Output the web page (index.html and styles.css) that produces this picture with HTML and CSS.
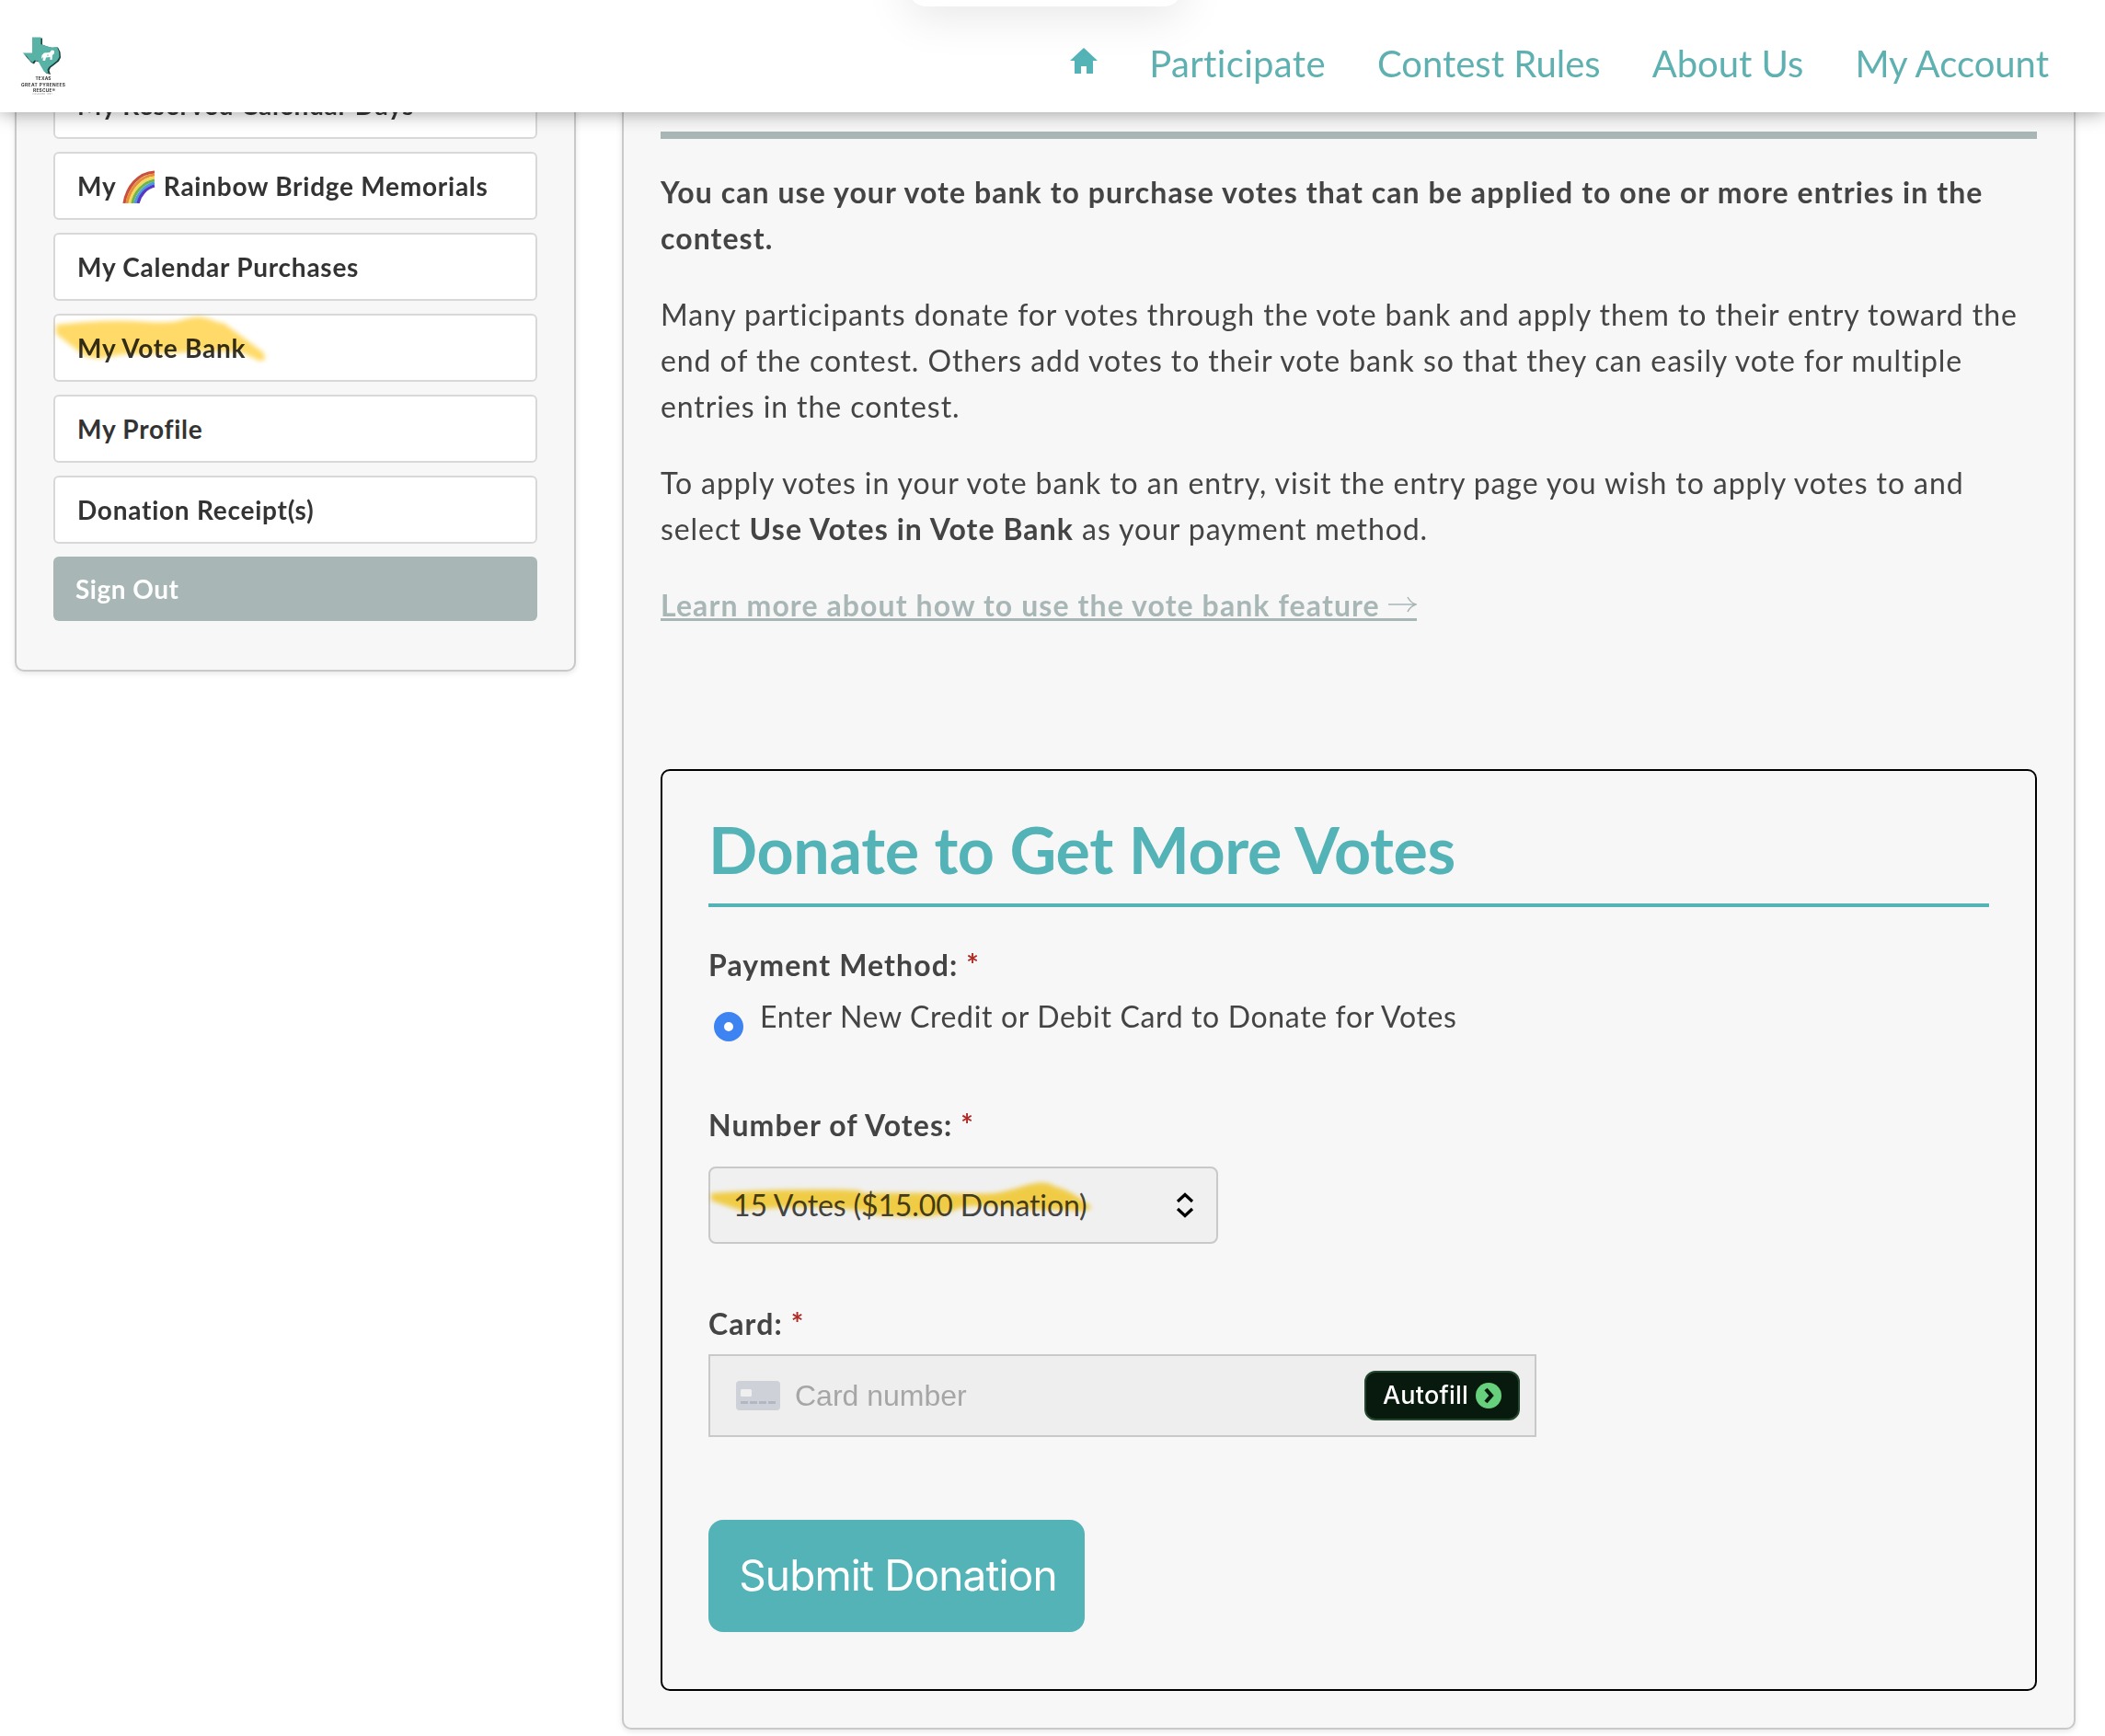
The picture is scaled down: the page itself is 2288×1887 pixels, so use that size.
FILE: index.html
```
<!DOCTYPE html>
<html lang="en">
<head>
	<meta charset="utf-8">
	<title>My Vote Bank</title>
	<link rel="stylesheet" href="styles.css">
</head>
<body>
	<header class="site-header">
		<a class="logo" href="#">
			<svg width="56" height="66" viewBox="0 0 56 66">
				<path d="M13 2H22V9L27 11L33 12.500L39 12L41.500 17L42 23L40 27L35 31L31 34L29.500 37L31 41.500L26 40L22.500 34L19 28L15 27L13 30L10 28.500L6 24L2 19L12.500 19Z" fill="#173f3b" transform="translate(1 .6)"/>
				<path d="M12 1.500H21.500V9L27 11L33 12.500L39 12L41 17L41.500 23L39 27L34 31L30 34L28.500 37L29.500 41L25 39L21.500 33L18.500 27.500L14.500 26.500L12.500 29L9.500 27L6 22L1.500 18.500L12 18.500Z" fill="#58b2a6"/>
				<path d="M22.500 21L25 18.500L31 18L33 15.500L36 16L36 19L34 21L33.500 26H31.500V23L27 23.500L26 27H23.500L24 23L22 25Z" fill="#fff"/>
				<path d="M28 21.500L29 20L30 21.500Z" fill="#58b2a6"/>
				<g text-anchor="middle" font-family="Inter, sans-serif" font-weight="700" fill="#333" letter-spacing="0">
					<text x="24" y="48" font-size="4.800" textLength="17">TEXAS</text>
					<text x="24" y="54.500" font-size="4.800" textLength="48">GREAT PYRENEES</text>
					<text x="25" y="60.500" font-size="4.800" textLength="24">RESCUE®</text>
					<text x="23" y="64" font-size="2.400" font-weight="400" fill="#999" textLength="21">FOUNDED 1991</text>
				</g>
			</svg>
		</a>
		<nav class="main-nav">
			<a class="home" href="#"><svg width="30" height="29" viewBox="0 0 30 29"><path d="M15 0L30 14H25V28H18V20H12V28H5V14H0Z" fill="#54b3b6"/></svg></a>
			<a class="participate" href="#">Participate</a>
			<a href="#">Contest Rules</a>
			<a href="#">About Us</a>
			<a href="#">My Account</a>
		</nav>
	</header>
	<div class="popover"></div>

	<div class="page">
		<aside class="sidebar">
			<a href="#">My Reserved Calendar Days</a>
			<a href="#">My <svg class="rainbow" width="36" height="36" viewBox="0 0 36 36" fill="none" stroke-width="3.200">
				<path d="M2 36C5 18 17 3 35 2" stroke="#c9503c"/>
				<path d="M5 36C8 20 19 6.500 35 5" stroke="#e58e3c"/>
				<path d="M8 36C11 22 21 9.500 35 8" stroke="#f3d95a"/>
				<path d="M11 36C13 24 23 13 35 11" stroke="#6fb450"/>
				<path d="M14 36C16 26 25 16 35 14" stroke="#4a9ae0"/>
				<path d="M17 36C19 27 26 19 35 17" stroke="#5b35c8"/>
			</svg> Rainbow Bridge Memorials</a>
			<a href="#">My Calendar Purchases</a>
			<a href="#">My Vote Bank
				<svg class="marker" width="240" height="60" viewBox="0 0 240 60"><path d="M3 12Q30 9 54 8T103 9T143 6T170 6T185 10L228 42Q234 52 223 51L205 42Q170 40 143 42T76 44L49 49L34 46L3 22Z"/></svg>
			</a>
			<a href="#">My Profile</a>
			<a href="#">Donation Receipt(s)</a>
			<a class="sign-out" href="#">Sign Out</a>
		</aside>

		<main class="content">
			<hr class="title-rule">
			<p><strong>You can use your vote bank to purchase votes that can be applied to one or more entries in the<br>contest.</strong></p>
			<p>Many participants donate for votes through the vote bank and apply them to their entry toward the<br>end of the contest. Others add votes to their vote bank so that they can easily vote for multiple<br>entries in the contest.</p>
			<p>To apply votes in your vote bank to an entry, visit the entry page you wish to apply votes to and<br>select <strong>Use Votes in Vote Bank</strong> as your payment method.</p>
			<p><a class="learn-more" href="#">Learn more about how to use the vote bank feature <svg width="31" height="22" viewBox="0 0 31 22"><path d="M0 9H29M21 1Q24 7 30 9Q24 11 21 17" fill="none" stroke="#a8b7b6" stroke-width="1.600"/></svg></a></p>

			<form class="donate">
				<h2>Donate to Get More Votes</h2>

				<label class="field-label">Payment Method: <span class="required">*</span></label>
				<div class="radio-row">
					<span class="radio"></span>
					<span>Enter New Credit or Debit Card to Donate for Votes</span>
				</div>

				<label class="field-label votes-label">Number of Votes: <span class="required">*</span></label>
				<div class="select">
					<span>15 Votes ($15.00 Donation)</span>
					<svg width="20" height="28" viewBox="0 0 20 28"><path d="M2 10L10 2.500L18 10M2 18L10 25.500L18 18" fill="none" stroke="#000" stroke-width="3.200"/></svg>
					<svg class="marker" width="430" height="70" viewBox="0 0 430 70"><path d="M3 29Q30 27 58 26T129 25T167 29Q210 28 255 29T310 29T343 21T375 21Q392 26 403 34T417 45L405 49Q390 46 376 47T321 44T266 48T206 54T173 49Q140 44 107 44T36 48L3 37Z"/></svg>
				</div>

				<label class="field-label card-label">Card: <span class="required">*</span></label>
				<div class="card-input">
					<svg width="48" height="32" viewBox="0 0 48 32">
						<rect width="48" height="32" rx="4" fill="#cfd1d8"/>
						<rect x="5" y="9" width="12" height="8" rx="1.500" fill="#efefef"/>
						<path d="M5 23.500H43" stroke="#b3b6c3" stroke-width="3" stroke-dasharray="8 2"/>
					</svg>
					<span class="placeholder">Card number</span>
					<span class="autofill">Autofill
						<svg width="28" height="28" viewBox="0 0 28 28"><circle cx="14" cy="14" r="14" fill="#67d07c"/><path d="M11 7L17 14L11 21" fill="none" stroke="#081a0e" stroke-width="4.200"/></svg>
					</span>
				</div>

				<button class="submit" type="button">Submit Donation</button>
			</form>
		</main>
	</div>
</body>
</html>
```
FILE: styles.css
```
* {
	box-sizing: border-box;
}
body {
	margin: 0;
	height: 1887px;
	overflow: hidden;
	background: #fff;
	color: #444;
	font-family: Lato, sans-serif;
	font-size: 32px;
	font-variant-ligatures: none;
	line-height: 50px;
	letter-spacing: .92px;
}
strong {
	letter-spacing: 1.08px;
}
a {
	text-decoration: none;
}

/* header */
.site-header {
	position: fixed;
	top: 0;
	left: 0;
	right: 0;
	z-index: 2;
	height: 122px;
	padding: 0 61px 0 23px;
	display: flex;
	justify-content: space-between;
	background: #fff;
	box-shadow: 0 0 20px rgba(0, 0, 0, .4);
}
.logo {
	padding-top: 39px;
}
.logo svg {
	display: block;
}
.main-nav {
	display: flex;
	gap: 56px;
	padding-top: 44px;
}
.main-nav a {
	color: #5fb0b0;
	font-size: 40px;
	letter-spacing: 0;
}
.main-nav .participate {
	letter-spacing: .35px;
}
.main-nav .home svg {
	display: block;
	margin-top: 8px;
}
.popover {
	position: fixed;
	z-index: 3;
	top: -60px;
	left: 987px;
	width: 298px;
	height: 67px;
	border-radius: 20px;
	background: #fff;
	box-shadow: 0 10px 50px rgba(0, 0, 0, .1);
}

/* layout */
.page {
	display: flex;
	align-items: flex-start;
	gap: 50px;
	padding: 0 32px 0 16px;
}
.sidebar,
.content {
	border: 2px solid #c9c9c9;
	border-radius: 10px;
	background: #f7f7f7;
	box-shadow: 0 2px 6px rgba(0, 0, 0, .1);
}

/* sidebar */
.sidebar {
	flex: 0 0 610px;
	padding: 75px 40px 53px;
	display: flex;
	flex-direction: column;
	gap: 14px;
}
.sidebar a {
	position: relative;
	height: 74px;
	padding: 0 24px;
	border: 2px solid #d8d8d8;
	border-radius: 6px;
	background: #fff;
	color: #333;
	font-size: 28px;
	font-weight: bold;
	line-height: 70px;
	letter-spacing: .75px;
	white-space: nowrap;
}
.sidebar .rainbow {
	margin-right: 1px;
	vertical-align: -8px;
}
.sidebar .sign-out {
	height: 70px;
	border: 0;
	background: #a8b7b6;
	color: #fff;
	letter-spacing: .5px;
}
.marker {
	position: absolute;
	top: -2px;
	left: -2px;
	fill: #ffda68;
	filter: blur(2.5px);
	mix-blend-mode: multiply;
}

/* content */
.content {
	flex: 1;
	min-width: 0;
	padding: 141px 40px 40px;
}
.title-rule {
	height: 8px;
	margin: 0 0 33px;
	border: 0;
	background: #a8b7b6;
}
.content p {
	margin: 0 0 33px;
	white-space: nowrap;
}
.learn-more {
	display: inline-block;
	border-bottom: 3px solid #a8b7b6;
	color: #a8b7b6;
	font-weight: bold;
	line-height: 29px;
	letter-spacing: 1.1px;
}

/* donation form */
.donate {
	height: 1002px;
	margin-top: 153px;
	padding: 46px 50px 0;
	border: 2px solid #000;
	border-radius: 10px;
}
.donate h2 {
	height: 102px;
	margin: 0 0 38px;
	border-bottom: 4px solid #54b3b6;
	color: #54b3b6;
	font-size: 70px;
	line-height: 79px;
	letter-spacing: -.32px;
}
.field-label {
	display: block;
	font-weight: bold;
	letter-spacing: 1.1px;
}
.required {
	color: #b02a24;
}
.radio-row {
	height: 56px;
	display: flex;
	align-items: flex-start;
	gap: 18px;
	padding: 6px 0 0 6px;
	letter-spacing: .65px;
}
.radio {
	width: 32px;
	height: 32px;
	margin-top: 20px;
	border: 11px solid #3e83f2;
	border-radius: 50%;
	background: #fff;
}
.votes-label {
	margin-top: 68px;
}
.select {
	position: relative;
	width: 554px;
	height: 84px;
	margin-top: 20px;
	padding: 0 24px 0 25px;
	display: flex;
	align-items: center;
	justify-content: space-between;
	border: 2px solid #c9c9c9;
	border-radius: 8px;
	background: #f0f0f0;
	letter-spacing: -.12px;
}
.select .marker {
	fill: #ffd94a;
}
.card-label {
	margin-top: 62px;
}
.card-input {
	width: 900px;
	height: 90px;
	margin-top: 8px;
	padding: 0 16px 0 28px;
	display: flex;
	align-items: center;
	border: 2px solid #c9c9c9;
	background: #eee;
}
.placeholder {
	margin-left: 16px;
	color: #a6a6a6;
	font-family: "Liberation Sans", sans-serif;
	font-size: 32px;
	letter-spacing: 0;
}
.autofill {
	width: 169px;
	height: 54px;
	margin-left: auto;
	padding-left: 18px;
	display: flex;
	align-items: center;
	gap: 8px;
	border: 2px solid #24452e;
	border-radius: 12px;
	background: #081a0e;
	color: #fff;
	font-family: Inter, sans-serif;
	font-size: 27px;
	font-weight: 500;
	letter-spacing: .2px;
}
.submit {
	display: block;
	width: 409px;
	height: 122px;
	margin-top: 90px;
	padding: 0 0 3px 3px;
	border: 0;
	border-radius: 16px;
	background: #54b3b6;
	color: #fff;
	font-family: Inter, sans-serif;
	font-size: 46px;
	letter-spacing: -.9px;
}
```
